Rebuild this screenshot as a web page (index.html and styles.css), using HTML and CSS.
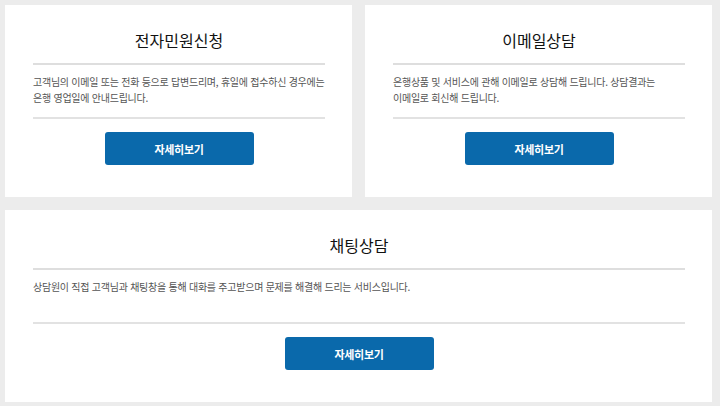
FILE: index.html
```html
<!DOCTYPE html>
<html lang="ko">
<head>
    <meta charset="UTF-8">
    <meta name="viewport" content="width=device-width, initial-scale=1.0">
    <title>상담 서비스</title>
    <link rel="stylesheet" href="styles.css">
</head>
<body>
    <!-- 상담 채널 목록 -->
    <div class="channel-grid">
        <div class="channel-card">
            <h2 class="channel-title">전자민원신청</h2>
            <p class="channel-desc">고객님의 이메일 또는 전화 등으로 답변드리며, 휴일에 접수하신 경우에는 은행 영업일에 안내드립니다.</p>
            <a href="#" class="btn-detail">자세히보기</a>
        </div>

        <div class="channel-card">
            <h2 class="channel-title">이메일상담</h2>
            <p class="channel-desc">은행상품 및 서비스에 관해 이메일로 상담해 드립니다. 상담결과는 이메일로 회신해 드립니다.</p>
            <a href="#" class="btn-detail">자세히보기</a>
        </div>

        <div class="channel-card wide">
            <h2 class="channel-title">채팅상담</h2>
            <p class="channel-desc">상담원이 직접 고객님과 채팅창을 통해 대화를 주고받으며 문제를 해결해 드리는 서비스입니다.</p>
            <a href="#" class="btn-detail">자세히보기</a>
        </div>
    </div>
</body>
</html>
```

FILE: styles.css
```css
/* 기본 */
* {
    box-sizing: border-box;
    margin: 0;
    padding: 0;
}

body {
    background: #ececec;
    font-family: "Noto Sans CJK KR", "Noto Sans", sans-serif;
    color: #333;
}

/* 카드 그리드 */
.channel-grid {
    display: grid;
    grid-template-columns: 347px 347px;
    gap: 13px;
    padding: 5px 8px 4px 5px;
}

.channel-card {
    background: #fff;
    padding: 22px 27px 32px 28px;
    height: 192px;
    display: flex;
    flex-direction: column;
    align-items: center;
}

.channel-card.wide {
    grid-column: 1 / 3;
}

.channel-title {
    width: 100%;
    font-size: 16px;
    font-weight: 400;
    letter-spacing: 0;
    line-height: 26px;
    color: #111;
    text-align: center;
    padding-bottom: 10px;
    border-bottom: 2px solid #dedede;
}

.channel-desc {
    width: 100%;
    height: 54px;
    padding-top: 9px;
    font-size: 10px;
    line-height: 16px;
    letter-spacing: -0.25px;
    word-break: keep-all;
    color: #555;
    border-bottom: 2px solid #e2e2e2;
}

/* 버튼 */
.btn-detail {
    display: flex;
    align-items: center;
    justify-content: center;
    width: 149px;
    height: 33px;
    margin-top: 13px;
    background: #0a69ab;
    border-radius: 3px;
    color: #fff;
    font-size: 11px;
    font-weight: 700;
    letter-spacing: -0.3px;
    text-decoration: none;
}
```
